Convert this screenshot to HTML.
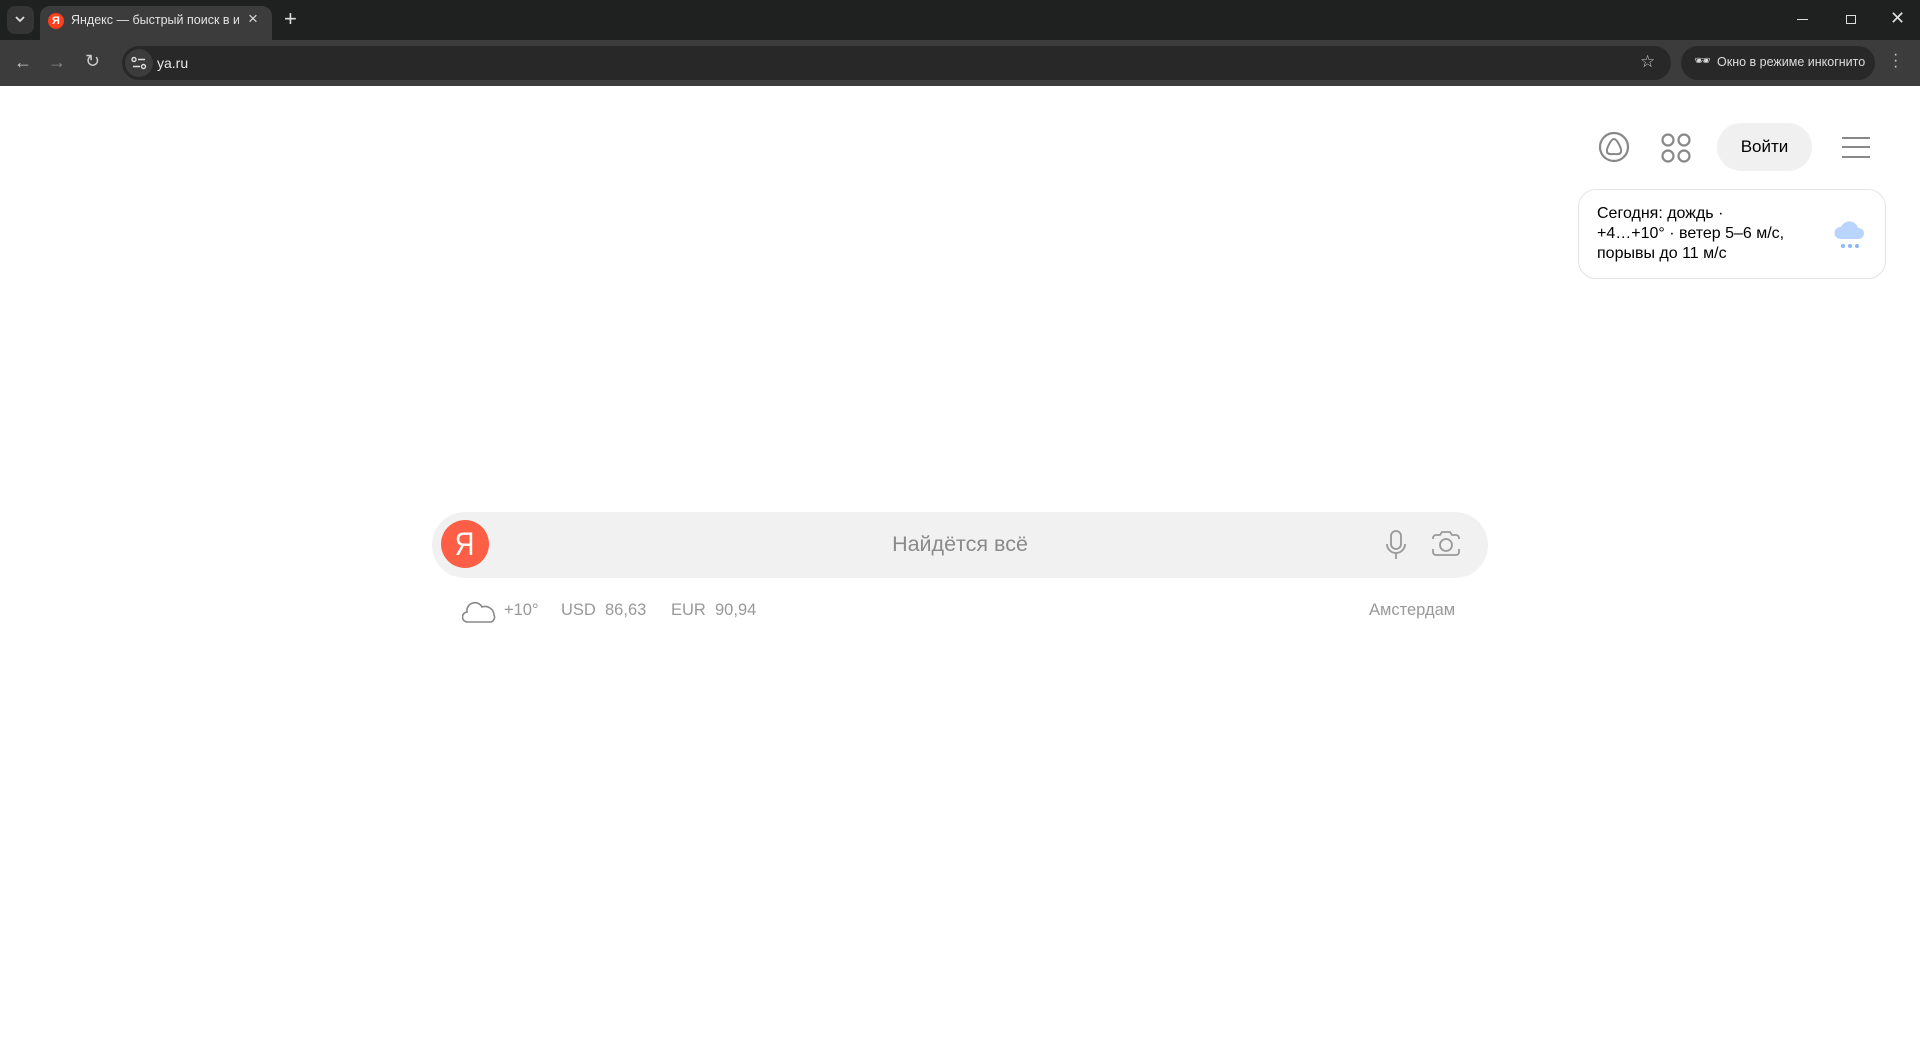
<!DOCTYPE html>
<html><head><meta charset="utf-8"><style>
*{margin:0;padding:0;box-sizing:border-box}
body{width:1920px;height:1037px;overflow:hidden;background:#fff;font-family:"Liberation Sans",sans-serif;position:relative}
.abs{position:absolute}
#tabs{left:0;top:0;width:1920px;height:40px;background:#1f2020}
#bar{left:0;top:40px;width:1920px;height:46px;background:#3c3c3c}
</style></head><body>
<div id="tabs" class="abs"></div>
<div class="abs" style="left:7px;top:6px;width:27px;height:28px;background:#353535;border-radius:8px"></div>
<svg class="abs" style="left:14px;top:14px" width="12" height="10"><path d="M2 3l4 4 4-4" stroke="#ddd" stroke-width="1.8" fill="none"/></svg>
<div class="abs" style="left:40px;top:6px;width:232px;height:34px;background:#3c3c3c;border-radius:10px 10px 0 0"></div>
<div class="abs" style="left:48px;top:13px;width:16px;height:16px;border-radius:50%;background:#fc3f1d;color:#fff;font-size:11px;text-align:center;line-height:16px;font-weight:bold">Я</div>
<div class="abs" style="left:71px;top:13px;width:168px;overflow:hidden;white-space:nowrap;color:#e3e3e3;font-size:12.5px">Яндекс — быстрый поиск в ин</div>
<div class="abs" style="left:248px;top:9px;color:#ddd;font-size:17px">×</div>
<div class="abs" style="left:284px;top:6px;color:#ddd;font-size:22px">+</div>
<div class="abs" style="left:1797px;top:19px;width:11px;height:1px;background:#ddd"></div>
<div class="abs" style="left:1846px;top:15px;width:10px;height:9px;border:1px solid #ddd"></div>
<div class="abs" style="left:1890px;top:8px;color:#ddd;font-size:18px">✕</div>
<div id="bar" class="abs"></div>
<div class="abs" style="left:14px;top:52px;color:#ccc;font-size:18px">←</div>
<div class="abs" style="left:48px;top:52px;color:#888;font-size:18px">→</div>
<div class="abs" style="left:85px;top:51px;color:#ccc;font-size:18px">↻</div>
<div class="abs" style="left:122px;top:46px;width:1549px;height:34px;background:#282828;border-radius:17px"></div>
<div class="abs" style="left:125px;top:49px;width:28px;height:28px;background:#3c3c3c;border-radius:50%"></div>
<svg class="abs" style="left:131px;top:56px" width="16" height="14"><g stroke="#ddd" stroke-width="1.4" fill="none"><circle cx="3" cy="3.5" r="2"/><path d="M7 3.5h7M2 10.5h7"/><circle cx="12.5" cy="10.5" r="2"/></g></svg>
<div class="abs" style="left:157px;top:55px;color:#e8e8e8;font-size:14px">ya.ru</div>
<div class="abs" style="left:1640px;top:52px;color:#ccc;font-size:17px">☆</div>
<div class="abs" style="left:1681px;top:46px;width:194px;height:34px;background:#282828;border-radius:17px"></div>
<div class="abs" style="left:1694px;top:53px;color:#ddd;font-size:13px">🕶</div>
<div class="abs" style="left:1717px;top:55px;color:#ddd;font-size:12.5px">Окно в режиме инкогнито</div>
<div class="abs" style="left:1893px;top:52px;color:#ccc;font-size:16px;line-height:6px">·<br>·<br>·</div>

<svg class="abs" style="left:1598px;top:131px" width="32" height="32"><circle cx="16" cy="16" r="14" stroke="#888" stroke-width="2.2" fill="none"/><path d="M16 8c-3 0-8 10-7 13s5 2 7 2 6 1 7-2-4-13-7-13z" stroke="#888" stroke-width="2" fill="none"/></svg>
<svg class="abs" style="left:1661px;top:133px" width="30" height="30"><g stroke="#888" stroke-width="2.2" fill="none"><circle cx="7" cy="7" r="5.5"/><circle cx="23" cy="7" r="5.5"/><circle cx="7" cy="23" r="5.5"/><circle cx="23" cy="23" r="5.5"/></g></svg>
<div class="abs" style="left:1717px;top:123px;width:95px;height:48px;background:#f0f0f0;border-radius:24px;text-align:center;line-height:48px;font-size:17px;color:#000">Войти</div>
<div class="abs" style="left:1842px;top:137px;width:28px;height:2px;background:#888;box-shadow:0 9px 0 #888,0 19px 0 #888"></div>

<div class="abs" style="left:1578px;top:189px;width:308px;height:90px;border:1px solid #e4e4e4;border-radius:18px"></div>
<div class="abs" style="left:1597px;top:204px;font-size:16px;line-height:20px;color:#000">Сегодня: дождь ·<br>+4…+10° · ветер 5–6 м/с,<br>порывы до 11 м/с</div>
<svg class="abs" style="left:1832px;top:215px" width="36" height="36"><path d="M8 24a6 6 0 0 1 1-12 9 9 0 0 1 17 1 5.5 5.5 0 0 1 1 11z" fill="#b8d4ff"/><g fill="#8bb8f5"><circle cx="11" cy="31" r="2"/><circle cx="18" cy="31" r="2"/><circle cx="25" cy="31" r="2"/></g></svg>

<div class="abs" style="left:432px;top:512px;width:1056px;height:66px;background:#f1f1f1;border-radius:33px"></div>
<div class="abs" style="left:441px;top:520px;width:48px;height:48px;border-radius:50%;background:#fc5f45;color:#fff;text-align:center;line-height:48px;font-size:32px"><span style="display:inline-block;transform:scaleX(0.85)">Я</span></div>
<div class="abs" style="left:760px;top:532px;width:400px;text-align:center;font-size:21.5px;color:#8a8a8a">Найдётся всё</div>
<svg class="abs" style="left:1384px;top:529px" width="24" height="32"><g stroke="#999" stroke-width="1.8" fill="none"><rect x="7" y="2" width="10" height="18" rx="5"/><path d="M3 15a9 9 0 0 0 18 0M12 24v6"/></g></svg>
<svg class="abs" style="left:1431px;top:530px" width="30" height="28"><g stroke="#999" stroke-width="1.8" fill="none"><path d="M2 9v-1a3 3 0 0 1 3-3h4l2-3h8l2 3h4a3 3 0 0 1 3 3v1M2 19v3a3 3 0 0 0 3 3h20a3 3 0 0 0 3-3v-3"/><circle cx="15" cy="15" r="6"/></g></svg>

<svg class="abs" style="left:462px;top:595px" width="36" height="30"><path d="M6 27a5 5 0 0 1-1-10 8 8 0 0 1 15-5 9 9 0 0 1 12 8 5 5 0 0 1-3 7z" stroke="#888" stroke-width="1.6" fill="none"/></svg>
<div class="abs" style="left:504px;top:601px;font-size:16.5px;color:#999">+10°</div>
<div class="abs" style="left:561px;top:601px;font-size:16.5px;color:#999">USD&nbsp;&nbsp;86,63</div>
<div class="abs" style="left:671px;top:601px;font-size:16.5px;color:#999">EUR&nbsp;&nbsp;90,94</div>
<div class="abs" style="left:1369px;top:601px;font-size:16.5px;color:#999">Амстердам</div>
</body></html>
